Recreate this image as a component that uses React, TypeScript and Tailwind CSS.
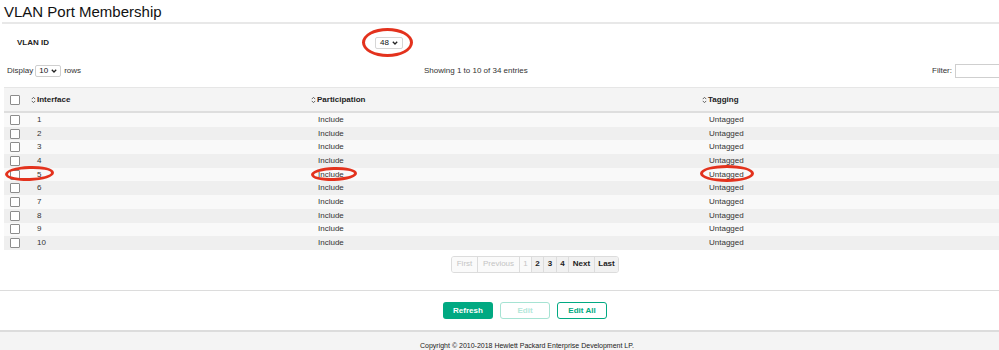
const rows = Array.from({ length: 10 }, (_, i) => i + 1)

const pages = [
  { label: 'First', w: 'w-[25px]', off: true },
  { label: 'Previous', w: 'w-[42px]', off: true },
  { label: '1', w: 'w-[12px]', off: true },
  { label: '2', w: 'w-[12px]', off: false },
  { label: '3', w: 'w-[13px]', off: false },
  { label: '4', w: 'w-[12px]', off: false },
  { label: 'Next', w: 'w-[26px]', off: false },
  { label: 'Last', w: 'w-[24px]', off: false },
]

function SortIcon() {
  return (
    <svg width="5" height="8" viewBox="0 0 5 8" className="shrink-0">
      <path d="M0.8 3.1 L2.5 1.3 L4.2 3.1 M0.8 4.9 L2.5 6.7 L4.2 4.9" fill="none" stroke="#555" strokeWidth="0.9" />
    </svg>
  )
}

function Chevron() {
  return (
    <svg width="6" height="4" viewBox="0 0 6 4" className="shrink-0">
      <path d="M0.8 0.8 L3 3 L5.2 0.8" fill="none" stroke="#222" strokeWidth="1.3" />
    </svg>
  )
}

function Check() {
  return <span className="block w-[10px] h-[10px] border border-[#8c8c8c] bg-white rounded-[1px]" />
}

function Ring({ className }: { className: string }) {
  return <div className={`absolute pointer-events-none rounded-[50%] border-[3px] border-[#e3321d] ${className}`} />
}

export default function App() {
  return (
    <div className="relative w-[999px] h-[350px] overflow-hidden bg-white text-[#333] font-['Liberation_Sans',Arial,sans-serif]">
      {/* Title */}
      <div className="h-[22px] pt-[3px] pl-[4px] text-[15px] leading-[18px] text-[#111]">VLAN Port Membership</div>
      <div className="h-[2px] ml-[2px] bg-[#e8e8e8]" />

      {/* VLAN ID */}
      <div className="flex items-center h-[37px] text-[8px]">
        <div className="w-[375px] pl-[17px] font-bold text-[#222]">VLAN ID</div>
        <div className="flex items-center gap-[3px] h-[12px] px-[4px] border border-[#d6d6d6] rounded-[2px] bg-white text-[#111]">
          48 <Chevron />
        </div>
      </div>

      {/* Display / info / filter */}
      <div className="flex items-center h-[20px] text-[8px]">
        <div className="flex items-center w-[424px] pl-[7px]">
          <span>Display</span>
          <div className="flex items-center gap-[3px] ml-[2px] h-[12px] px-[3px] border border-[#cfcfcf] rounded-[2px] bg-white text-[#111]">
            10 <Chevron />
          </div>
          <span className="ml-[3px]">rows</span>
        </div>
        <span>Showing 1 to 10 of 34 entries</span>
        <div className="flex-1" />
        <span>Filter:</span>
        <div className="ml-[3px] -mr-[16px] w-[60px] h-[14px] border border-[#cfcfcf] bg-white shrink-0" />
      </div>

      {/* Table */}
      <div className="ml-[4px] mt-[6px] text-[8px]">
        <div className="grid grid-cols-[22px_280px_391px_1fr] h-[26px] items-center bg-[#f4f4f4] border-t border-[#e6e6e6] border-b-2 border-b-[#dedede] font-bold text-[#222]">
          <div className="pl-[6px]"><Check /></div>
          <div className="flex items-center gap-[1px] pl-[5px]"><SortIcon />Interface</div>
          <div className="flex items-center gap-[1px] pl-[5px]"><SortIcon />Participation</div>
          <div className="flex items-center gap-[1px] pl-[5px]"><SortIcon />Tagging</div>
        </div>
        {rows.map((n) => (
          <div
            key={n}
            className={`grid grid-cols-[22px_280px_391px_1fr] h-[13.7px] items-center ${n % 2 ? 'bg-[#f9f9f9]' : 'bg-[#efefef]'}`}
          >
            <div className="pl-[6px]"><Check /></div>
            <div className="pl-[11px]">{n}</div>
            <div className="pl-[12px]">Include</div>
            <div className="pl-[12px]">Untagged</div>
          </div>
        ))}
      </div>

      {/* Pagination */}
      <div className="flex pl-[451px] mt-[6px] text-[8px]">
        <div className="flex h-[17px] border border-[#dcdcdc] rounded-[3px] overflow-hidden">
          {pages.map((p, i) => (
            <div
              key={p.label}
              className={`${p.w} flex items-center justify-center ${i ? 'border-l border-[#dcdcdc]' : ''} ${
                p.off ? 'bg-[#fafafa] text-[#c4c4c4]' : 'bg-[#f1f1f1] text-[#222] font-bold'
              }`}
            >
              {p.label}
            </div>
          ))}
        </div>
      </div>

      <div className="mt-[17px] h-[1.5px] bg-[#dcdcdc]" />

      {/* Actions */}
      <div className="flex gap-[7px] pl-[443px] pt-[11px] pb-[11px] text-[8px] font-bold">
        <button className="w-[50px] h-[17px] rounded-[3px] bg-[#01a982] text-white">Refresh</button>
        <button className="w-[50px] h-[17px] rounded-[3px] border-[1.5px] border-[#a6e3d3] bg-white text-[#b4e8da]">Edit</button>
        <button className="w-[50px] h-[17px] rounded-[3px] border-[1.5px] border-[#01a982] bg-white text-[#01a982]">Edit All</button>
      </div>

      <div className="h-[1.5px] bg-[#dcdcdc]" />

      {/* Footer */}
      <div className="h-[40px] bg-[#f4f4f4] pt-[9px] pl-[420px] text-[7px] leading-[9px] text-[#222]">
        Copyright © 2010-2018 Hewlett Packard Enterprise Development LP.
      </div>

      {/* Annotations */}
      <Ring className="left-[362px] top-[28px] w-[51px] h-[29px]" />
      <Ring className="left-[5px] top-[166px] w-[49px] h-[15px] -rotate-2" />
      <Ring className="left-[311px] top-[167px] w-[46px] h-[14px] -rotate-2" />
      <Ring className="left-[700px] top-[165px] w-[54px] h-[17px]" />
    </div>
  )
}
